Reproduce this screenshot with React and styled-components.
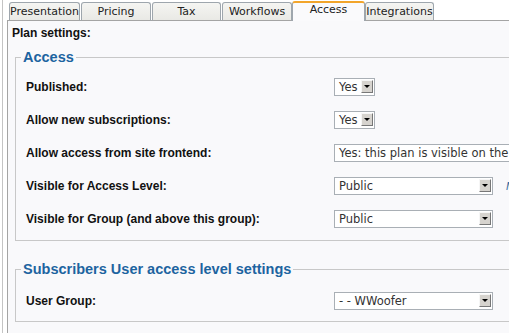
import React from 'react';
import styled, { createGlobalStyle } from 'styled-components';

const GlobalStyle = createGlobalStyle`
  html, body {
    margin: 0;
    padding: 0;
    background: #fff;
  }
  body {
    width: 509px;
    height: 333px;
    overflow: hidden;
    font-family: "DejaVu Sans", sans-serif;
  }
`;

const Page = styled.div`
  box-sizing: border-box;
  margin-left: 2px;
  border-left: 1px solid #c4c4c4;
  padding-left: 4px;
  height: 333px;
  width: 700px;
`;

const TabBar = styled.ul`
  list-style: none;
  margin: 0;
  padding: 0 0 0 2px;
  height: 21px;
  display: flex;
  align-items: flex-end;
  position: relative;
  z-index: 1;
`;

const Tab = styled.li`
  box-sizing: border-box;
  flex: none;
  width: ${(p) => p.$w}px;
  margin-right: ${(p) => p.$gap}px;
  height: ${(p) => (p.$active ? 20 : 19)}px;
  border: 1px solid #9ea6ad;
  border-top: ${(p) => (p.$active ? '2px solid #f2a52b' : '1px solid #9ea6ad')};
  border-bottom: ${(p) => (p.$active ? 'none' : '1px solid #a4a4a4')};
  border-radius: 3px 3px 0 0;
  background: ${(p) => (p.$active ? '#fafafc' : 'linear-gradient(#f5f5f2, #e9e9e5)')};
  font-size: 11px;
  line-height: ${(p) => (p.$active ? 14 : 17)}px;
  text-align: center;
  white-space: nowrap;
  color: #222;
  display: flex;
  justify-content: center;
`;

const Panel = styled.div`
  margin-top: -1px;
  border-top: 1px solid #a4a4a4;
  border-left: 1px solid #a4a4a4;
  background: #f9f9fb;
  padding: 6px 0 0 4px;
  height: 400px;
`;

const Title = styled.div`
  font: bold 12px/13px "Liberation Sans", Arial, sans-serif;
  color: #111;
`;

const Fieldset = styled.fieldset`
  margin: ${(p) => p.$mt}px 0 0 3px;
  padding: 0;
  border: 1px solid #c8c8c8;
  min-width: 0;
  width: 600px;
`;

const Legend = styled.legend`
  margin-left: 5px;
  padding: 0 2px;
  font: bold 14.5px/16px "Liberation Sans", Arial, sans-serif;
  color: #1d64a0;
`;

const Rows = styled.div`
  padding: ${(p) => p.$pt}px 0 ${(p) => p.$pb}px 10px;
`;

const Row = styled.div`
  display: flex;
  align-items: center;
  height: 33px;
`;

const Label = styled.div`
  flex: none;
  width: 308px;
  font: bold 12px/13px "Liberation Sans", Arial, sans-serif;
  color: #111;
  padding-top: 2px;
`;

const Select = styled.div`
  box-sizing: border-box;
  flex: none;
  width: ${(p) => p.$w}px;
  height: 18px;
  border: 1px solid #a9afb5;
  background: #fff;
  display: flex;
  align-items: center;
  justify-content: space-between;
  padding: 0 1px 0 4px;
  font-size: 11.5px;
  color: #333;
  white-space: nowrap;
  overflow: hidden;
`;

const ArrowButton = styled.span`
  box-sizing: border-box;
  flex: none;
  width: 12px;
  height: 13px;
  background: #d6d3ce;
  border: 1px solid;
  border-color: #f6f6f6 #777 #777 #f6f6f6;
  display: flex;
  align-items: center;
  justify-content: center;

  &::after {
    content: '';
    border-left: 3px solid transparent;
    border-right: 3px solid transparent;
    border-top: 3px solid #000;
  }
`;

const SideLink = styled.a`
  margin-left: 13px;
  font: italic 11px "Liberation Sans", Arial, sans-serif;
  color: #1d64a0;
  text-decoration: none;
`;

const tabs = [
  { name: 'Presentation', w: 71, gap: 1 },
  { name: 'Pricing', w: 70, gap: 1 },
  { name: 'Tax', w: 69, gap: 1 },
  { name: 'Workflows', w: 70, gap: 0 },
  { name: 'Access', w: 73, gap: 0, active: true },
  { name: 'Integrations', w: 69, gap: 0 },
];

const Dropdown = ({ w, value, arrow = true }) => (
  <Select $w={w}>
    <span>{value}</span>
    {arrow && <ArrowButton />}
  </Select>
);

export default function App() {
  return (
    <>
      <GlobalStyle />
      <Page>
        <TabBar>
          {tabs.map((t) => (
            <Tab key={t.name} $w={t.w} $gap={t.gap} $active={t.active}>
              {t.name}
            </Tab>
          ))}
        </TabBar>
        <Panel>
          <Title>Plan settings:</Title>
          <Fieldset $mt={9}>
            <Legend>Access</Legend>
            <Rows $pt={5} $pb={5}>
              <Row>
                <Label>Published:</Label>
                <Dropdown w={41} value="Yes" />
              </Row>
              <Row>
                <Label>Allow new subscriptions:</Label>
                <Dropdown w={41} value="Yes" />
              </Row>
              <Row>
                <Label>Allow access from site frontend:</Label>
                <Dropdown w={300} value="Yes: this plan is visible on the site frontend" arrow={false} />
              </Row>
              <Row>
                <Label>Visible for Access Level:</Label>
                <Dropdown w={159} value="Public" />
                <SideLink href="#">Manage</SideLink>
              </Row>
              <Row>
                <Label>Visible for Group (and above this group):</Label>
                <Dropdown w={159} value="Public" />
              </Row>
            </Rows>
          </Fieldset>
          <Fieldset $mt={20}>
            <Legend>Subscribers User access level settings</Legend>
            <Rows $pt={7} $pb={4}>
              <Row>
                <Label>User Group:</Label>
                <Dropdown w={159} value="- - WWoofer" />
              </Row>
            </Rows>
          </Fieldset>
        </Panel>
      </Page>
    </>
  );
}
